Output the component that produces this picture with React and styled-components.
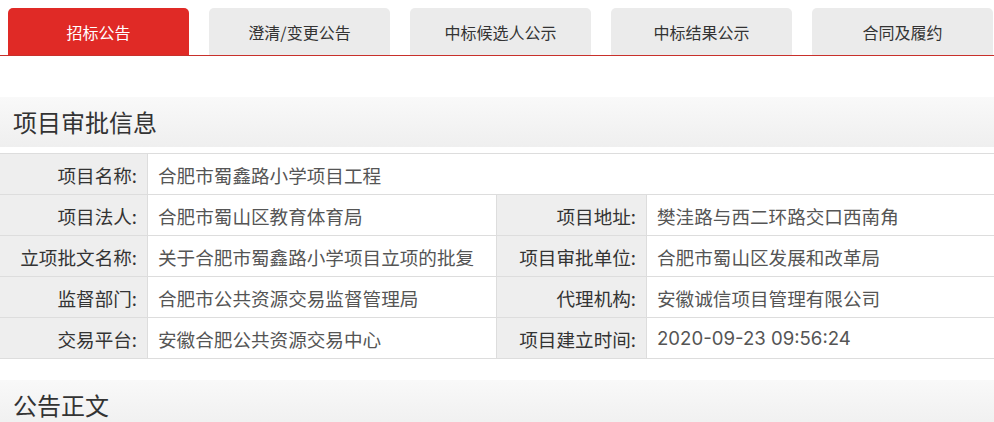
import React from 'react';
import styled, { createGlobalStyle } from 'styled-components';

const GlobalStyle = createGlobalStyle`
    body {
        margin: 0;
        background: #fff;
        font-family: "Noto Sans CJK SC", "Noto Sans", sans-serif;
    }
`;

const tabs = ['招标公告', '澄清/变更公告', '中标候选人公示', '中标结果公示', '合同及履约'];

const rows = [
    [['项目名称', '合肥市蜀鑫路小学项目工程']],
    [['项目法人', '合肥市蜀山区教育体育局'], ['项目地址', '樊洼路与西二环路交口西南角']],
    [['立项批文名称', '关于合肥市蜀鑫路小学项目立项的批复'], ['项目审批单位', '合肥市蜀山区发展和改革局']],
    [['监督部门', '合肥市公共资源交易监督管理局'], ['代理机构', '安徽诚信项目管理有限公司']],
    [['交易平台', '安徽合肥公共资源交易中心'], ['项目建立时间', '2020-09-23 09:56:24']],
];

const App = () => {
    return (
        <Page>
            <GlobalStyle />
            <TabBar>
                {tabs.map((t, i) => (
                    <Tab key={t} $active={i === 0}>{t}</Tab>
                ))}
            </TabBar>

            <SectionTitle>项目审批信息</SectionTitle>
            <InfoGrid>
                {rows.map((row, r) =>
                    row.length === 1 ? (
                        <React.Fragment key={r}>
                            <Label>{row[0][0]}:</Label>
                            <Value $span>{row[0][1]}</Value>
                        </React.Fragment>
                    ) : (
                        <React.Fragment key={r}>
                            <Label>{row[0][0]}:</Label>
                            <Value $divider>{row[0][1]}</Value>
                            <Label>{row[1][0]}:</Label>
                            <Value>{row[1][1]}</Value>
                        </React.Fragment>
                    )
                )}
            </InfoGrid>

            <SectionTitle $top={21}>公告正文</SectionTitle>
        </Page>
    );
};

export default App;

const Page = styled.div`
    width: 994px;
    overflow: hidden;
`;

const TabBar = styled.div`
    display: flex;
    gap: 20px;
    padding: 8px 0 0 8px;
    border-bottom: 1px solid #c8302b;
`;

const Tab = styled.div`
    flex: 0 0 181px;
    height: 47px;
    display: flex;
    align-items: center;
    justify-content: center;
    border-radius: 5px 5px 0 0;
    font-size: 16px;
    color: ${p => (p.$active ? '#fff' : '#333')};
    background: ${p => (p.$active ? '#e02a26' : '#ebebeb')};
`;

const SectionTitle = styled.h2`
    margin: ${p => p.$top || 41}px 0 0;
    height: 50px;
    line-height: 50px;
    padding-left: 13px;
    font-size: 24px;
    font-weight: normal;
    color: #333;
    background: linear-gradient(#f9f9f9, #efefef);
`;

const InfoGrid = styled.div`
    margin-top: 6px;
    display: grid;
    grid-template-columns: 148px 349px 150px 1fr;
    border-top: 1px solid #dddddd;
`;

const Label = styled.div`
    height: 40px;
    display: flex;
    align-items: center;
    justify-content: flex-end;
    padding-right: 10px;
    background: #eeeeee;
    border-right: 1px solid #dddddd;
    border-bottom: 1px solid #dddddd;
    font-size: 18.6px;
    color: #333;
`;

const Value = styled.div`
    grid-column: ${p => (p.$span ? 'span 3' : 'auto')};
    height: 40px;
    display: flex;
    align-items: center;
    padding-left: 10px;
    background: #fff;
    border-right: ${p => (p.$divider ? '1px solid #dddddd' : 'none')};
    border-bottom: 1px solid #dddddd;
    font-family: Inter, "Noto Sans CJK SC", sans-serif;
    font-size: 18.6px;
    color: #555;
`;
